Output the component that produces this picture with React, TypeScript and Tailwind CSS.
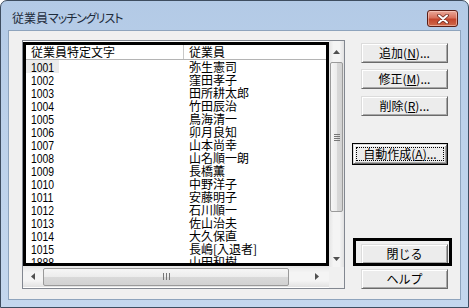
import React from "react"

const rows: [string, string][] = [
  ["1001", "弥生憲司"],
  ["1002", "窪田孝子"],
  ["1003", "田所耕太郎"],
  ["1004", "竹田辰治"],
  ["1005", "鳥海清一"],
  ["1006", "卯月良知"],
  ["1007", "山本尚幸"],
  ["1008", "山名順一朗"],
  ["1009", "長橋薫"],
  ["1010", "中野洋子"],
  ["1011", "安藤明子"],
  ["1012", "石川順一"],
  ["1013", "佐山治夫"],
  ["1014", "大久保直"],
  ["1015", "長嶋[入退者]"],
  ["1888", "山田和樹"],
]

function Arrow({ dir }: { dir: "up" | "down" | "left" | "right" }) {
  const pts = {
    up: "0,4 3.5,0 7,4",
    down: "0,0 3.5,4 7,0",
    left: "4,0 0,3.5 4,7",
    right: "0,0 4,3.5 0,7",
  }[dir]
  const w = dir === "up" || dir === "down" ? 7 : 4
  const h = dir === "up" || dir === "down" ? 4 : 7
  return (
    <svg width={w} height={h} viewBox={`0 0 ${w} ${h}`}>
      <polygon points={pts} fill="#505050" />
    </svg>
  )
}

function Btn({
  children,
  className = "",
}: {
  children: React.ReactNode
  className?: string
}) {
  return (
    <div
      className={`flex h-[20px] items-center justify-center border border-t-[#dcdcdc] border-l-[#dcdcdc] border-r-[#6a6a6a] border-b-[#6a6a6a] bg-[#ececec] text-[12px] leading-none text-black shadow-[inset_1px_1px_0_#ffffff,inset_-1px_-1px_0_#a8a8a8] ${className}`}
    >
      {children}
    </div>
  )
}

export default function App() {
  return (
    <div className="h-[308px] w-[469px] overflow-hidden bg-white font-['Noto_Sans_CJK_JP',sans-serif]">
      <div className="flex h-[308px] w-[469px] flex-col rounded-t-[7px] border border-[#3e4d60] bg-[linear-gradient(180deg,#b3cae6,#bcd1ea_40%,#c4d7ee)]">
        {/* Title bar */}
        <div className="flex h-[29px] items-start">
          <div className="mt-[9px] pl-[11px] text-[12px] leading-[16px] text-[#1e2c3c] [font-feature-settings:'palt']">
            従業員<span className="tracking-[-1px]">マッチングリスト</span>
          </div>
          <div className="ml-auto mr-[10px] mt-[9px] flex h-[17px] w-[31px] items-center justify-center rounded-[3px] border border-[#5a1e16] bg-[linear-gradient(180deg,#eaa99a,#d9725d_45%,#c4452c_55%,#cf6a4a)] shadow-[inset_0_0_0_1px_rgba(255,220,210,0.5)]">
            <svg width="12" height="10" viewBox="0 0 12 10">
              <path d="M2 1.5 L10 8.5 M10 1.5 L2 8.5" stroke="#6b2a20" strokeWidth="3.6" strokeLinecap="round" />
              <path d="M2 1.5 L10 8.5 M10 1.5 L2 8.5" stroke="#ffffff" strokeWidth="2" strokeLinecap="round" />
            </svg>
          </div>
        </div>

        {/* Client area */}
        <div className="mx-[7px] flex h-[270px] items-start border border-[#8ea4bd] bg-[#f0f0f0]">
          {/* List box */}
          <div className="ml-[13px] mt-[9px] flex h-[249px] w-[323px] border border-[#828790] bg-white">
            <div className="flex w-[306px] flex-col">
              <div className="h-[1px]" />
              <div className="h-[224px] overflow-hidden border-[3px] border-black text-[12px] text-black">
                <div className="flex h-[15px] border-b border-[#b4b4b4] leading-[14px]">
                  <div className="w-[158px] border-r border-[#c8c8c8] pl-[5px]">従業員特定文字</div>
                  <div className="pl-[5px]">従業員</div>
                </div>
                {rows.map(([code, name], i) => (
                  <div key={code} className="flex h-[13px] leading-[13px]">
                    <div className="w-[158px]">
                      <div className={`h-[13px] w-[33px] pl-[5px] ${i === 0 ? "bg-[#ebebeb]" : ""}`}>
                        <span className="inline-block origin-left scale-x-[0.8] font-['Liberation_Sans',sans-serif] text-[13px]">
                          {code}
                        </span>
                      </div>
                    </div>
                    <div className="pl-[5px]">{name}</div>
                  </div>
                ))}
              </div>
              {/* Horizontal scrollbar */}
              <div className="flex h-[21px] items-center bg-[linear-gradient(180deg,#e6e6e6,#f4f4f4_30%,#f4f4f4_70%,#e2e2e2)]">
                <div className="flex h-[19px] w-[19px] items-center justify-center">
                  <Arrow dir="left" />
                </div>
                <div className="ml-[1px] flex h-[18px] w-[246px] items-center justify-center rounded-[2px] border border-[#9a9a9a] bg-[linear-gradient(180deg,#f6f6f6,#ececec_50%,#d9d9d9_51%,#d2d2d2)]">
                  <div className="flex gap-[2px]">
                    <div className="h-[7px] w-[1px] bg-[#777]" />
                    <div className="h-[7px] w-[1px] bg-[#777]" />
                    <div className="h-[7px] w-[1px] bg-[#777]" />
                  </div>
                </div>
                <div className="flex-1" />
                <div className="mr-[3px] flex h-[19px] w-[19px] items-center justify-center">
                  <Arrow dir="right" />
                </div>
              </div>
            </div>
            <div className="flex w-[15px] flex-col">
              {/* Vertical scrollbar */}
              <div className="flex h-[226px] flex-col items-center bg-[linear-gradient(90deg,#e4e4e4,#f4f4f4_30%,#f4f4f4_70%,#e2e2e2)]">
                <div className="flex h-[21px] w-full items-center justify-center">
                  <Arrow dir="up" />
                </div>
                <div className="flex h-[150px] w-[13px] items-center justify-center rounded-[2px] border border-[#9a9a9a] bg-[linear-gradient(90deg,#f6f6f6,#ececec_50%,#d9d9d9_51%,#d2d2d2)]">
                  <div className="flex flex-col gap-[1px]">
                    <div className="h-[1px] w-[6px] bg-[#777]" />
                    <div className="h-[1px] w-[6px] bg-[#777]" />
                    <div className="h-[1px] w-[6px] bg-[#777]" />
                    <div className="h-[1px] w-[6px] bg-[#777]" />
                  </div>
                </div>
                <div className="flex-1" />
                <div className="flex h-[17px] w-full items-center justify-center">
                  <Arrow dir="down" />
                </div>
              </div>
              <div className="h-[21px] bg-[#f0f0f0]" />
            </div>
          </div>

          {/* Buttons */}
          <div className="relative ml-[7px] mt-[12px] flex w-[100px] flex-col">
            <Btn className="ml-[9px] w-[87px]">
              追加(<span className="underline">N</span>)...
            </Btn>
            <Btn className="ml-[9px] mt-[6px] w-[87px]">
              修正(<span className="underline">M</span>)...
            </Btn>
            <Btn className="ml-[9px] mt-[7px] w-[87px]">
              削除(<span className="underline">R</span>)...
            </Btn>
            <div className="mt-[27px] w-[96px] border border-black">
              <Btn className="relative h-[18px] w-full">
                <div className="absolute inset-[2px] border border-dotted border-black" />
                自動作成(<span className="underline">A</span>)...
              </Btn>
            </div>
            <Btn className="ml-[9px] mt-[79px] w-[87px]">閉じる</Btn>
            <Btn className="ml-[9px] mt-[5px] w-[87px]">ヘルプ</Btn>
            <div className="absolute left-[1px] top-[195px] h-[28px] w-[99px] border-[3px] border-black" />
          </div>
        </div>
      </div>
    </div>
  )
}
